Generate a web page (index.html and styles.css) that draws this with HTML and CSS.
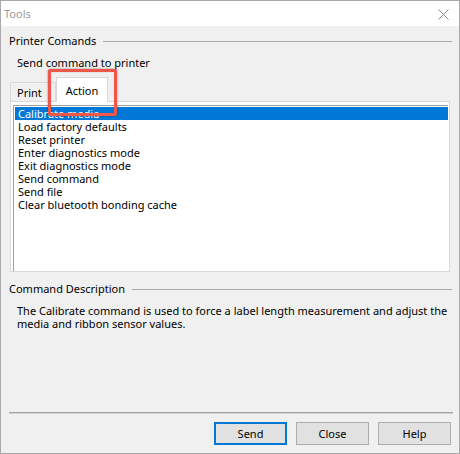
FILE: index.html
```html
<!DOCTYPE html>
<html>
<head>
<meta charset="utf-8">
<link rel="stylesheet" href="styles.css">
</head>
<body>
<div class="window">
  <div class="titlebar">
    <span class="title">Tools</span>
    <svg class="close" width="11" height="11" viewBox="0 0 11 11"><path d="M0.5 0.5 L10.5 10.5 M10.5 0.5 L0.5 10.5" stroke="#8a8a8a" stroke-width="1" fill="none"/></svg>
  </div>
  <div class="content">
    <div class="group-header"><span>Printer Comands</span><span class="rule"></span></div>
    <div class="subtext">Send command to printer</div>
    <div class="tabs">
      <div class="tabstrip">
        <div class="tab">Print</div>
        <div class="tab active">Action</div>
        <div class="highlight"></div>
      </div>
      <div class="panel">
        <ul class="listbox">
          <li class="selected">Calibrate media</li>
          <li>Load factory defaults</li>
          <li>Reset printer</li>
          <li>Enter diagnostics mode</li>
          <li>Exit diagnostics mode</li>
          <li>Send command</li>
          <li>Send file</li>
          <li>Clear bluetooth bonding cache</li>
        </ul>
      </div>
    </div>
    <div class="group-header second"><span>Command Description</span><span class="rule"></span></div>
    <p class="desc">The Calibrate command is used to force a label length measurement and adjust the media and ribbon sensor values.</p>
  </div>
  <div class="footer">
    <div class="sep"></div>
    <div class="buttons">
      <button class="btn default">Send</button>
      <button class="btn">Close</button>
      <button class="btn">Help</button>
    </div>
  </div>
</div>
</body>
</html>
```
FILE: styles.css
```css
* { box-sizing: border-box; }
html, body { margin: 0; padding: 0; }
body {
  font-family: "Noto Sans", "Open Sans", sans-serif;
  font-size: 11px;
  color: #000;
  background: #fff;
}
.window {
  width: 460px;
  height: 454px;
  border: 1px solid #a8a8a8;
  background: #f0f0f0;
  display: flex;
  flex-direction: column;
}
.titlebar {
  height: 25px;
  background: #fff;
  display: flex;
  align-items: center;
  justify-content: space-between;
  padding: 0 10px 0 3px;
  flex: none;
}
.title { color: #9a9a9a; font-size: 11px; line-height: 16px; margin-top: 1px; }
.close { display: block; margin-top: 1px; }
.content {
  flex: 1;
  padding: 0 7px 0 8px;
  display: flex;
  flex-direction: column;
}
.group-header {
  display: flex;
  align-items: center;
  line-height: 16px;
  margin-top: 7px;
}
.group-header.second { margin-top: 9px; }
.rule {
  flex: 1;
  height: 1px;
  background: #a9a9a9;
  margin-left: 7px;
  margin-top: 1px;
}
.subtext {
  line-height: 16px;
  margin-top: 6px;
  padding-left: 8px;
}
.tabs { margin-top: 6px; }
.tabstrip {
  position: relative;
  display: flex;
  align-items: flex-end;
  height: 24px;
  padding-left: 1px;
}
.tab {
  height: 19px;
  width: 46px;
  border: 1px solid #d9d9d9;
  border-bottom: none;
  background: #f0f0f0;
  line-height: 16px;
  padding: 2px 0 0 6px;
}
.tab.active {
  height: 25px;
  width: 52px;
  background: #fff;
  margin-bottom: -1px;
  position: relative;
  z-index: 1;
  padding: 5px 0 0 0;
  text-align: center;
}
.highlight {
  position: absolute;
  left: 39px;
  top: -8px;
  width: 69px;
  height: 47px;
  border: 3px solid #ef574b;
  border-radius: 2px;
  box-shadow: 0 0 2px rgba(60, 0, 0, 0.55), inset 0 0 1px rgba(60, 0, 0, 0.4);
  z-index: 2;
}
.panel {
  margin-left: 1px;
  width: 440px;
  height: 171px;
  border: 1px solid #d9d9d9;
  background: #fff;
  padding: 3px 1px 0 2px;
}
.listbox {
  list-style: none;
  margin: 0;
  height: 100%;
  border-top: 1px solid #a0a0a0;
  border-left: 1px solid #a0a0a0;
  padding: 1px 0 0 1px;
}
.listbox li {
  height: 13px;
  line-height: 13px;
  padding-left: 3px;
  white-space: nowrap;
}
.listbox li.selected {
  background: #0078d7;
  color: #fff;
}
.desc {
  margin: 7px 0 0 0;
  padding-left: 8px;
  padding-right: 4px;
  line-height: 13px;
}
.footer { flex: none; }
.sep {
  margin: 0 6px 0 8px;
  height: 2px;
  border-top: 1px solid #a3a3a3;
  border-bottom: 1px solid #d2d2d2;
}
.buttons {
  display: flex;
  justify-content: flex-end;
  gap: 9px;
  padding: 8px 8px 8px 0;
}
.btn {
  width: 73px;
  height: 23px;
  background: #e1e1e1;
  border: 1px solid #adadad;
  font-family: inherit;
  font-size: 11px;
  color: #000;
  padding: 0;
  margin: 0;
}
.btn.default { border: 2px solid #0078d7; }
```
